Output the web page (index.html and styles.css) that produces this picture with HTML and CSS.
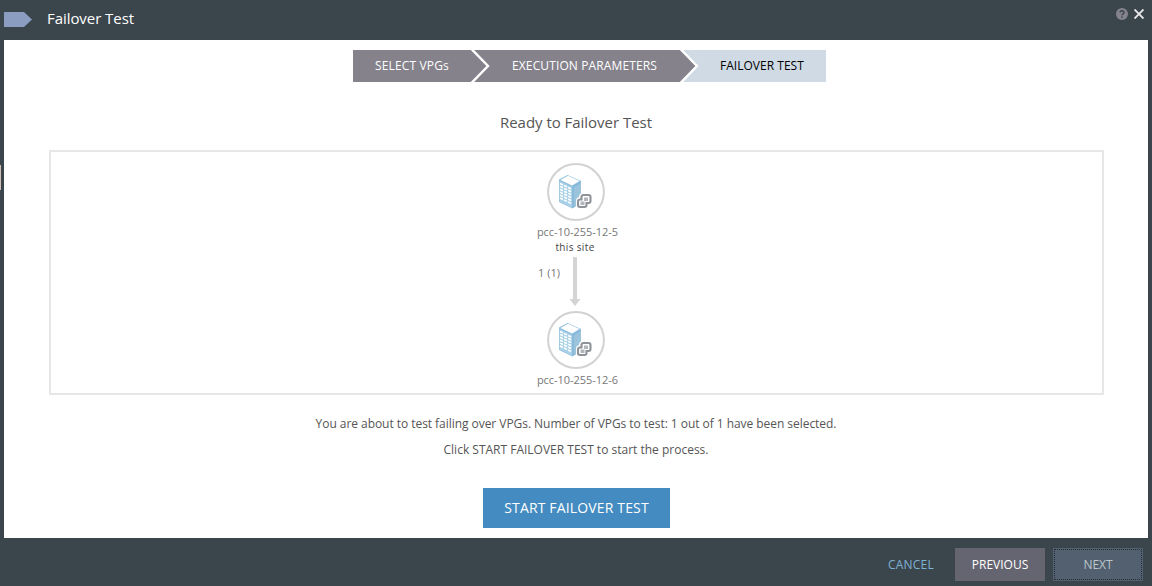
FILE: index.html
```html
<!DOCTYPE html>
<html lang="en">
<head>
<meta charset="utf-8">
<title>Failover Test</title>
<link rel="stylesheet" href="styles.css">
</head>
<body>
<svg class="defs" width="0" height="0" aria-hidden="true">
  <symbol id="site" viewBox="0 0 58 58">
    <circle cx="29" cy="29" r="27.9" fill="#fff" stroke="#d2d2d2" stroke-width="2"/>
    <path d="M12 16.500 20.500 12 34 18 34 40 25.500 45.500 12 39Z" fill="#8fbfdc"/>
    <path d="M13.500 16.900 21 12.800 32.500 18 25 22.500Z" fill="#fff"/>
    <path d="M12.500 18 25 24V44.500L12.500 38.500Z" fill="#a9d1e8"/>
    <path d="M25 24 34 19V40L25 45Z" fill="#9cc3dc"/>
    <g stroke="#fff" stroke-width="1.600" stroke-dasharray="3.300 1.200">
      <path d="M13 20.500 25 26.300"/><path d="M13 23.400 25 29.200"/><path d="M13 26.300 25 32.100"/><path d="M13 29.200 25 35"/><path d="M13 32.100 25 37.900"/><path d="M13 35 25 40.800"/>
    </g>
    <path d="M26 44.500V24L33.500 19.500" fill="none" stroke="#78b2d8" stroke-width="1"/>
    <path d="M36 32H41.500Q43.500 32 43.500 34V38.500Q43.500 40.500 41.500 40.500H40V42Q40 44.500 38 44.500H33Q31 44.500 31 42.500V38Q31 36 33 36H34V34Q34 32 36 32Z" fill="#fff" stroke="#fff" stroke-width="4"/>
    <path d="M36.500 32H41.500Q43.500 32 43.500 34V38Q43.500 40 41.500 40H39.500V42Q39.500 44 37.500 44H33Q31 44 31 42V38.500Q31 36.500 33 36.500H34.500V34Q34.500 32 36.500 32Z" fill="#fff" stroke="#8e9399" stroke-width="2.100"/>
    <path d="M37 34.500H41V38H37ZM33.500 38.500H37.500V42H33.500Z" fill="#b2b5ba"/>
  </symbol>
</svg>
<div class="dialog">
  <header class="header">
    <svg class="tag" width="28" height="15" viewBox="0 0 28 15"><path d="M0 0H20L28 7.500 20 15H0Z" fill="#8b9dc0"/></svg>
    <h1 class="title">Failover Test</h1>
    <div class="tools">
      <svg width="12" height="12" viewBox="0 0 12 12"><circle cx="6" cy="6" r="6" fill="#85838f"/><path d="M4 4.600Q4 2.700 6 2.700T8 4.500Q8 5.500 6.900 6 6 6.500 6 7.300M6 8.300V9.700" fill="none" stroke="#3b454c" stroke-width="1.400"/></svg>
      <svg width="10" height="10" viewBox="0 0 10 10"><path d="M.5.500 9.500 9.500M9.500.500.5 9.500" stroke="#e8e8ea" stroke-width="1.900"/></svg>
    </div>
  </header>
  <main class="content">
    <nav class="steps">
      <div class="step step-first">SELECT VPGs</div>
      <svg class="chevron" width="19" height="32" viewBox="0 0 19 32"><path d="M0 0H19V32H0Z" fill="#85828c"/><path d="M.5 -1 17 16 .5 33" fill="none" stroke="#fff" stroke-width="2.400"/></svg>
      <div class="step step-second">EXECUTION PARAMETERS</div>
      <svg class="chevron" width="19" height="32" viewBox="0 0 19 32"><path d="M0 0H19V32H0Z" fill="#cfdae5"/><path d="M0 0H1L16 16 1 32H0Z" fill="#85828c"/><path d="M.5 -1 17 16 .5 33" fill="none" stroke="#fff" stroke-width="2.400"/></svg>
      <div class="step step-current">FAILOVER TEST</div>
    </nav>
    <h2 class="ready">Ready to Failover Test</h2>
    <section class="diagram">
      <svg class="site" width="58" height="58"><use href="#site"/></svg>
      <div class="site-name">pcc-10-255-12-5</div>
      <div class="site-note">this site</div>
      <div class="link">
        <span class="count">1 (1)</span>
        <svg width="12" height="49" viewBox="0 0 12 49"><path d="M4 0H8V42H11.500L6 49 .5 42H4Z" fill="#d4d4d4"/></svg>
      </div>
      <svg class="site" width="58" height="58"><use href="#site"/></svg>
      <div class="site-name">pcc-10-255-12-6</div>
    </section>
    <p class="message tight">You are about to test failing over VPGs. Number of VPGs to test: 1 out of 1 have been selected.</p>
    <p class="message">Click START FAILOVER TEST to start the process.</p>
    <button class="start">START FAILOVER TEST</button>
  </main>
  <footer class="footer">
    <button class="btn cancel">CANCEL</button>
    <button class="btn previous">PREVIOUS</button>
    <button class="btn next">NEXT</button>
  </footer>
  <i class="edge-mark"></i>
</div>
</body>
</html>
```

FILE: styles.css
```css
* { box-sizing: border-box; margin: 0; padding: 0; }
body { font-family: "Open Sans", "Liberation Sans", sans-serif; color: #555; overflow: hidden; }
svg { display: block; flex: none; }
.defs { position: absolute; }
button { border: 0; font-family: inherit; white-space: nowrap; }
.dialog { position: relative; width: 1152px; height: 586px; background: #3b454c; display: flex; flex-direction: column; }
.header { height: 40px; display: flex; padding: 0 8px 0 4px; }
.tag { margin-top: 12px; }
.title { margin-left: 15px; font-size: 15px; font-weight: 400; line-height: 37px; color: #fff; letter-spacing: -.06px; }
.tools { display: flex; gap: 6px; margin: 8px 0 0 auto; }
.tools svg:last-child { margin-top: 1px; }
.content { height: 498px; margin: 0 4px; background: #fff; display: flex; flex-direction: column; align-items: center; }
.steps { display: flex; width: 473px; height: 32px; margin: 10px 0 0 27px; font-size: 12px; line-height: 32px; white-space: nowrap; }
.step { background: #85828c; color: #fff; }
.step-first { width: 118px; padding-left: 22px; letter-spacing: .15px; }
.step-second { width: 190px; padding-left: 22px; letter-spacing: .12px; }
.step-current { width: 127px; padding-left: 21px; background: #cfdae5; color: #000; letter-spacing: .02px; }
.ready { margin-top: 29px; font-size: 15px; font-weight: 400; line-height: 23px; color: #555; letter-spacing: -.03px; }
.diagram { width: 1055px; height: 245px; margin: 16px 0 0 1px; border: 2px solid #e7e7e7; padding-top: 11px; display: flex; flex-direction: column; align-items: center; font-size: 11px; }
.site { margin-right: 1px; }
.site-name { height: 15px; margin: 3px 0 0 2px; line-height: 16px; color: #777; letter-spacing: -.04px; }
.site-note { height: 16px; font-size: 10px; line-height: 15px; color: #444; margin-right: 3px; margin-top: 1px; letter-spacing: .35px; }
.link { width: 76px; height: 55px; display: flex; padding-top: 1px; margin-right: 3px; }
.count { width: 32px; line-height: 32px; padding-left: 1px; color: #777; }
.message { height: 26px; line-height: 26px; font-size: 12px; color: #555; white-space: nowrap; }
.tight { margin-top: 16px; letter-spacing: -.045px; }
.start { width: 187px; height: 40px; margin: 25px 0 0 1px; padding-bottom: 2px; background: #438bc0; color: #fff; font-size: 14px; letter-spacing: .15px; }
.footer { height: 48px; display: flex; justify-content: flex-end; align-items: flex-start; padding: 10px 9px 0 0; }
.btn { height: 33px; width: 90px; font-size: 12px; color: #fff; }
.cancel { background: none; color: #7eb2d2; width: 88px; letter-spacing: .2px; }
.previous { background: #656572; }
.next { margin-left: 8px; background: #526070; color: #bdc5ca; outline: 1px dotted #252e38; outline-offset: -2px; }
.edge-mark { position: absolute; left: 0; top: 165px; width: 1px; height: 25px; background: #d0bdb8; }
```
